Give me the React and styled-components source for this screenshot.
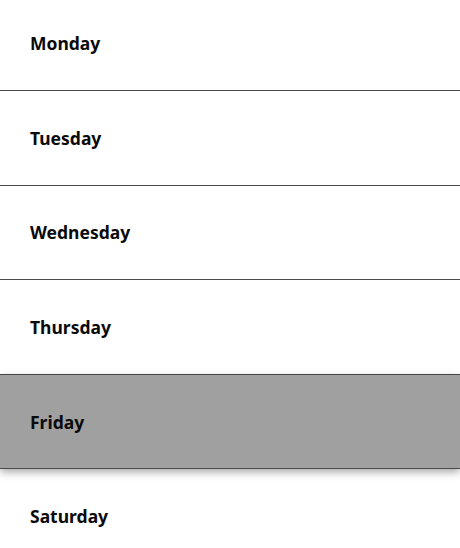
import React from "react";
import styled, { createGlobalStyle } from "styled-components";

const GlobalStyle = createGlobalStyle`
    html, body {
        margin: 0;
        padding: 0;
        background: #ffffff;
        overflow: hidden;
    }
    body {
        font-family: "Noto Sans", "Open Sans", sans-serif;
    }
`;

const List = styled.ul`
    list-style: none;
    margin: -3.5px 0 0 0;
    padding: 0;
`;

const Row = styled.li`
    position: relative;
    display: flex;
    align-items: center;
    height: 93.6px;
    padding-left: 30px;
    border-bottom: 1px solid #4a4a4a;
    background: ${(p) => (p.$active ? "#a0a0a0" : "#ffffff")};
    box-shadow: ${(p) => (p.$active ? "0 3px 8px rgba(0, 0, 0, 0.35)" : "none")};
    z-index: ${(p) => (p.$active ? 1 : 0)};
    font-size: 17.5px;
    font-weight: 700;
    color: #0a0a0a;
`;

const days = ["Monday", "Tuesday", "Wednesday", "Thursday", "Friday", "Saturday"];

export default function App() {
    return (
        <>
            <GlobalStyle />
            <List>
                {days.map((day) => (
                    <Row key={day} $active={day === "Friday"}>
                        {day}
                    </Row>
                ))}
            </List>
        </>
    );
}
